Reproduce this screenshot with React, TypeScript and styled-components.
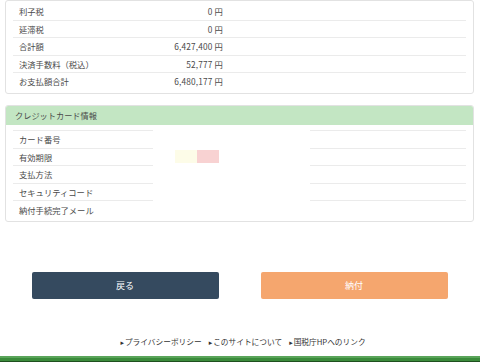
import styled, { createGlobalStyle } from "styled-components"

const GlobalStyle = createGlobalStyle`
	body {
		margin: 0;
		background: #fff;
		font-family: "Noto Sans CJK JP", "Noto Sans", sans-serif;
		color: #4a4a4a;
	}
`

const Page = styled.div`
	width: 480px;
	height: 362px;
	overflow: hidden;
	display: flex;
	flex-direction: column;
`

const Content = styled.div`
	padding: 0 6px 0 5px;
`

const Card = styled.div<{ $gap?: number }>`
	margin-top: ${(p) => p.$gap ?? 0}px;
	border: 1px solid #e2e2e2;
	border-radius: 3px;
	background: #fff;
`

const CardHeader = styled.div`
	height: 19.5px;
	display: flex;
	align-items: center;
	padding-left: 9px;
	background: #c3e6c3;
	border-radius: 2px 2px 0 0;
	font-size: 8.2px;
	color: #4a4a4a;
`

const Table = styled.div<{ $top: number }>`
	padding: ${(p) => p.$top}px 7px 3px 7px;
`

const Row = styled.div<{ $h: number; $first?: boolean; $ruled?: boolean }>`
	display: grid;
	grid-template-columns: 140px 74px 1fr;
	box-sizing: border-box;
	height: ${(p) => p.$h}px;
	border-top: 1px solid ${(p) => (p.$first && !p.$ruled ? "transparent" : "#ebebeb")};
	font-size: 8.3px;
`

const Label = styled.div`
	display: flex;
	align-items: center;
	padding-left: 6px;
	color: #4a4a4a;
`

const Value = styled.div`
	display: flex;
	align-items: center;
	justify-content: flex-end;
	padding-right: 4px;
	color: #4a4a4a;
	letter-spacing: 0.15px;
`

const MaskCell = styled.div`
	grid-column: 2 / 4;
	box-sizing: border-box;
	width: 157px;
	display: flex;
	align-items: center;
	margin-top: -1px;
	background: #fff;
	padding-left: 22px;
`

const Mask = styled.span<{ $color: string }>`
	display: inline-block;
	width: 22px;
	height: 13px;
	background: ${(p) => p.$color};
`

const ButtonRow = styled.div`
	display: flex;
	justify-content: center;
	gap: 42px;
	margin-top: 50px;
	padding-right: 1px;
`

const Button = styled.button<{ $variant: "back" | "pay" }>`
	width: 187px;
	height: 27px;
	border: none;
	border-radius: 2px;
	background: ${(p) => (p.$variant === "back" ? "#354a5f" : "#f5a66e")};
	color: #fff;
	font-family: inherit;
	font-size: 9px;
	cursor: pointer;
`

const Footer = styled.div`
	margin-top: 37px;
	display: flex;
	justify-content: center;
	gap: 7px;
	font-size: 7.7px;
	line-height: 12px;
	color: #333;
	padding-left: 6px;
`

const FooterLink = styled.a`
	color: #333;
	text-decoration: none;
	&::before {
		content: "▸";
		font-family: "DejaVu Sans", sans-serif;
		font-size: 7px;
		margin-right: 1px;
	}
`

const GreenBar = styled.div`
	margin-top: auto;
	height: 6px;
	background: linear-gradient(#5aa55a 0 2px, #3b8b3b 2px 5px, #1f4f1f 5px);
`

const summary = [
	{ label: "利子税", value: "0 円" },
	{ label: "延滞税", value: "0 円" },
	{ label: "合計額", value: "6,427,400 円" },
	{ label: "決済手数料（税込）", value: "52,777 円" },
	{ label: "お支払額合計", value: "6,480,177 円" },
]

const cardFields = ["カード番号", "有効期限", "支払方法", "セキュリティコード", "納付手続完了メール"]

export default function App() {
	return (
		<Page>
			<GlobalStyle />
			<Content>
				<Card>
					<Table $top={1}>
						{summary.map((item, i) => (
							<Row key={item.label} $h={17.5} $first={i === 0}>
								<Label>{item.label}</Label>
								<Value>{item.value}</Value>
							</Row>
						))}
					</Table>
				</Card>

				<Card $gap={11}>
					<CardHeader>クレジットカード情報</CardHeader>
					<Table $top={5}>
						{cardFields.map((label, i) => (
							<Row key={label} $h={17.6} $first={i === 0} $ruled>
								<Label>{label}</Label>
								<MaskCell>
									{label === "有効期限" && (
										<>
											<Mask $color="#fdfce8" />
											<Mask $color="#f8d2d2" />
										</>
									)}
								</MaskCell>
							</Row>
						))}
					</Table>
				</Card>
			</Content>

			<ButtonRow>
				<Button $variant="back">戻る</Button>
				<Button $variant="pay">納付</Button>
			</ButtonRow>

			<Footer>
				<FooterLink href="#">プライバシーポリシー</FooterLink>
				<FooterLink href="#">このサイトについて</FooterLink>
				<FooterLink href="#">国税庁HPへのリンク</FooterLink>
			</Footer>

			<GreenBar />
		</Page>
	)
}
